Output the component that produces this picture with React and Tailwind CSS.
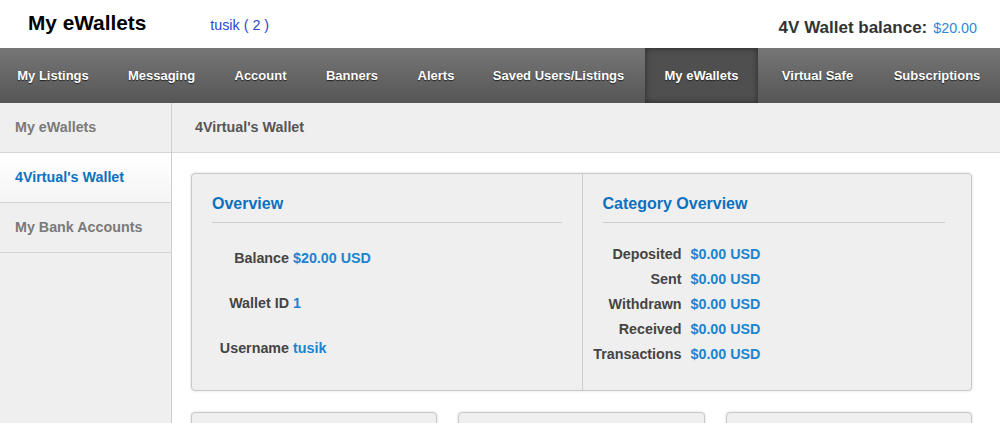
import React from "react";

const navItems = [
  { label: "My Listings", w: "w-[106px]" },
  { label: "Messaging", w: "w-[103px]" },
  { label: "Account", w: "w-[87px]" },
  { label: "Banners", w: "w-[88px]" },
  { label: "Alerts", w: "w-[72px]" },
  { label: "Saved Users/Listings", w: "w-[165px]" },
  { label: "My eWallets", w: "w-[113px]" },
  { label: "Virtual Safe", w: "w-[111px]" },
  { label: "Subscriptions", w: "w-[120px]" },
];

const sideItems = [
  { label: "My eWallets", active: false },
  { label: "4Virtual's Wallet", active: true },
  { label: "My Bank Accounts", active: false },
];

const catRows = ["Deposited", "Sent", "Withdrawn", "Received", "Transactions"];

export default function App() {
  return (
    <div
      className="w-[1000px] h-[423px] overflow-hidden bg-white flex flex-col"
      style={{ fontFamily: '"Liberation Sans", Arial, sans-serif' }}
    >
      {/* Header */}
      <div className="h-[48px] flex shrink-0">
        <div className="flex items-baseline pl-[28px] pt-[7px]">
          <span className="text-[20.8px] font-bold text-black leading-normal">My eWallets</span>
          <span className="ml-[64px] text-[14.3px] text-[#2b45d6] leading-normal">tusik ( 2 )</span>
        </div>
        <div className="ml-auto flex items-baseline pr-[23px] pt-[15px]">
          <span className="text-[17px] font-bold text-[#333] leading-normal">4V Wallet balance:</span>
          <span className="ml-[6px] text-[14.3px] text-[#2e8ad8] leading-normal">$20.00</span>
        </div>
      </div>

      {/* Nav */}
      <div className="h-[55px] shrink-0 flex gap-1 bg-gradient-to-b from-[#767676] to-[#565656]">
        {navItems.map((n) => (
          <div
            key={n.label}
            className={
              n.w +
              " shrink-0 h-full flex items-center justify-center text-[13px] font-bold text-white whitespace-nowrap [text-shadow:0_1px_1px_#222] " +
              (n.label === "My eWallets"
                ? "bg-[#4f4f4f] shadow-[inset_0_0_6px_rgba(0,0,0,0.5)]"
                : "")
            }
          >
            {n.label}
          </div>
        ))}
      </div>

      {/* Body */}
      <div className="flex flex-1 min-h-0">
        {/* Sidebar */}
        <div className="w-[172px] shrink-0 bg-[#efefef] border-r border-[#cfcfcf]">
          {sideItems.map((s) => (
            <div
              key={s.label}
              className={
                "h-[50px] flex items-center pl-[15px] pt-[1px] border-b border-[#d4d4d4] text-[14.3px] font-bold " +
                (s.active
                  ? "bg-gradient-to-b from-white to-[#f5f5f5] text-[#0b71bf]"
                  : "text-[#7a7a7a]")
              }
            >
              {s.label}
            </div>
          ))}
        </div>

        {/* Main */}
        <div className="flex-1 flex flex-col min-w-0">
          <div className="h-[50px] shrink-0 flex items-center pl-[23px] pt-[1px] bg-[#efefef] border-b border-[#d8d8d8] text-[14.3px] font-bold text-[#555]">
            4Virtual's Wallet
          </div>

          <div className="pl-[19px] pr-[28px] pt-[20px]">
            {/* Main card */}
            <div className="h-[218px] grid grid-cols-2 bg-[#efefef] border border-[#c9c9c9] rounded-[4px] shadow-[0_0_3px_rgba(0,0,0,0.15)]">
              {/* Overview */}
              <div className="pl-[20px] pr-[20px] pt-[20px]">
                <div className="text-[16px] leading-[19px] font-bold text-[#0b71bf]">Overview</div>
                <div className="mt-[9px] h-px bg-[#cccccc]" />
                <div className="mt-[13px] grid grid-cols-[77px_1fr] text-[14.3px] font-bold">
                  {[
                    ["Balance", "$20.00 USD"],
                    ["Wallet ID", "1"],
                    ["Username", "tusik"],
                  ].map(([l, v]) => (
                    <React.Fragment key={l}>
                      <div className="h-[45px] flex items-center justify-end whitespace-nowrap text-[#444]">{l}</div>
                      <div className="h-[45px] flex items-center pl-[4px] text-[#1a84cf]">{v}</div>
                    </React.Fragment>
                  ))}
                </div>
              </div>

              {/* Category overview */}
              <div className="border-l border-[#cccccc] pl-[20px] pr-[26px] pt-[20px]">
                <div className="text-[16px] leading-[19px] font-bold text-[#0b71bf]">Category Overview</div>
                <div className="mt-[9px] h-px bg-[#cccccc]" />
                <div className="mt-[19px] grid grid-cols-[79px_1fr] text-[14.3px] font-bold">
                  {catRows.map((l) => (
                    <React.Fragment key={l}>
                      <div className="h-[25px] flex items-center justify-end whitespace-nowrap text-[#444]">{l}</div>
                      <div className="h-[25px] flex items-center pl-[9px] text-[#1a84cf]">$0.00 USD</div>
                    </React.Fragment>
                  ))}
                </div>
              </div>
            </div>

            {/* Bottom cards */}
            <div className="mt-[21px] grid grid-cols-3 gap-[21px]">
              {[0, 1, 2].map((i) => (
                <div
                  key={i}
                  className="h-[80px] bg-[#efefef] border border-[#c9c9c9] rounded-[4px] shadow-[0_0_3px_rgba(0,0,0,0.15)]"
                />
              ))}
            </div>
          </div>
        </div>
      </div>
    </div>
  );
}
